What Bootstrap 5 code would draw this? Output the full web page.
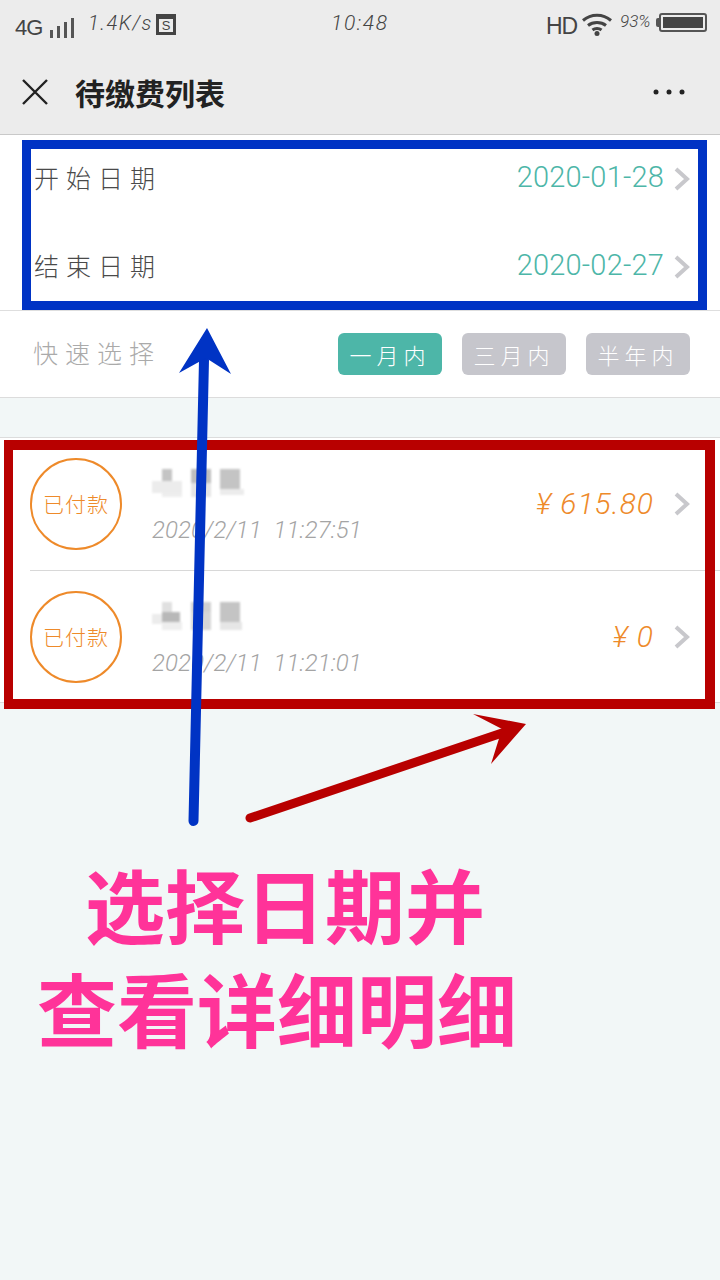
<!DOCTYPE html>
<html lang="zh">
<head>
<meta charset="utf-8">
<title>待缴费列表</title>
<link href="https://cdn.jsdelivr.net/npm/bootstrap@5.3.0/dist/css/bootstrap.min.css" rel="stylesheet">
<style>
html,body{margin:0;background:#f2f7f7}
.phone{position:relative;width:720px;height:1280px;overflow:hidden;background:#f2f7f7;font-family:"Noto Sans CJK SC",sans-serif;font-weight:300}
.latin{font-family:Roboto,"Noto Sans CJK SC",sans-serif;font-weight:300}
.statusrow{height:50px;background:#ececec;padding:0 12px 0 15px;color:#444}
.st-4g{font:400 22px/1 "Liberation Sans",sans-serif;letter-spacing:-1px;width:35px;margin-top:6px}
.st-bars{width:28px;height:20px;gap:4px;margin-top:6px}
.st-bars i{display:block;width:3px;background:#555}
.st-speed{font-size:20px;font-style:italic;margin-left:10px;width:68px;letter-spacing:1.5px;margin-top:-4px;white-space:nowrap}
.st-s{width:20px;height:21px;border:3px solid #444;border-top-width:5px;font:400 13px/1 "Liberation Sans",sans-serif;margin-top:-1px}
.st-time{font-size:21px;font-style:italic;letter-spacing:1.6px;margin-left:155px;width:215px;margin-top:-3px;white-space:nowrap}
.st-hd{font:400 23px/1 "Liberation Sans",sans-serif;letter-spacing:-1px;width:35px;margin-top:3px}
.st-pct{font-size:17px;font-style:italic;width:40px;padding-left:7px;margin-top:-6px;white-space:nowrap;flex:0 0 43px}
.st-nub{width:3px;height:9px;background:#555;margin:-6px 0 0 0;flex:0 0 3px;border-radius:2px 0 0 2px}
.st-batt{width:48px;height:19px;border:2px solid #555;border-radius:3px;padding:2px;margin-top:-6px}
.st-batt i{display:block;height:100%;background:#444}
.titlebar{height:85px;background:#ececec;border-bottom:1px solid #c9c9c9;padding:0 35px 0 22px}
.page-title{font-size:30px;line-height:1;font-weight:700;color:#222;margin:0 0 0 27px}
.panel{background:#fff}
.date-row{height:88px;padding:0 30px 0 34px}
.date-row.last{border-bottom:1px solid #dedede}
.date-label{font-size:25px;letter-spacing:7px;color:#4a4a4a;margin-top:-2px}
.date-val{font-size:29px;color:#4db6a8;margin-right:10px;letter-spacing:.2px;transform:translateY(-1px)}
.quick-row{height:87px;padding:0 30px 0 33px;border-bottom:1px solid #dcdcdc}
.quick-label{font-size:25px;letter-spacing:7px;color:#aaa;margin-top:-2px}
.range-btn{width:104px;height:42px;border:0;border-radius:6px;padding:0;font-size:22px;letter-spacing:5px;line-height:42px;color:#fff;background:#c6c6cc;font-weight:300}
.range-btn.on{background:#4db6a8}
.bill-list{margin-top:39px;background:#fff;border-top:1px solid #dcdcdc;border-bottom:1px solid #dcdcdc;padding-left:30px}
.bill{height:132px;padding-right:30px}
.bill+.bill{border-top:1px solid #d8d8d8}
.stamp{flex:0 0 92px;width:92px;height:92px;border:2px solid #ee8a2a;border-radius:50%;color:#ee8a2a;font-size:21px;letter-spacing:1px;margin-right:30px}
.bill-body{padding-top:6px}
.bill-name{display:block;width:96px;height:28px;margin-bottom:18px;filter:blur(1px)}
.bill-time{font-size:24px;line-height:30px;color:#a4a4a4;font-style:italic;letter-spacing:.1px;white-space:nowrap}
.bill-amt{font-size:30px;line-height:1;color:#ee8a2a;font-style:italic;margin-right:20px;letter-spacing:1px;white-space:nowrap}
.chev{flex:0 0 16px}
.caption{font-size:80px;line-height:104px;font-weight:700;color:#ff3399;margin-top:147px}
.cap-1{padding-left:85px}
.cap-2{padding-left:37px}
.box-blue,.box-red{position:absolute;pointer-events:none}
.box-blue{left:22px;top:140px;width:685px;height:170px;border:9px solid #0033c4}
.box-red{left:4px;top:440px;width:711px;height:269px;border:10px solid #b80000;border-left-width:9px}
.overlay{position:absolute;left:0;top:0}
</style>
</head>
<body>
<div class="phone">
  <div class="statusrow d-flex align-items-center">
    <span class="st-4g">4G</span>
    <span class="st-bars d-flex align-items-end"><i style="height:8px"></i><i style="height:12px"></i><i style="height:16px"></i><i style="height:20px"></i></span>
    <span class="st-speed latin">1.4K/s</span>
    <span class="st-s d-flex align-items-center justify-content-center">S</span>
    <span class="st-time latin">10:48</span>
    <span class="st-hd">HD</span>
    <svg width="32" height="24" viewBox="0 0 32 24" class="flex-shrink-0" style="margin-top:-2px"><path d="M2 8.5C10 1.5 22 1.500 30 8.500M7 13.500C12 9.500 20 9.500 25 13.500M11.500 18C14 16 18 16 20.500 18" fill="none" stroke="#444" stroke-width="3"/><circle cx="16" cy="21.500" r="2.500" fill="#444"/></svg>
    <span class="st-pct latin">93%</span>
    <span class="st-nub"></span>
    <span class="st-batt flex-shrink-0"><i></i></span>
  </div>

  <div class="titlebar d-flex align-items-center">
    <svg width="26" height="26" viewBox="0 0 26 26" class="flex-shrink-0"><path d="M1 1L25 25M25 1L1 25" stroke="#222" stroke-width="2.400" fill="none"/></svg>
    <h1 class="page-title flex-grow-1">待缴费列表</h1>
    <svg width="32" height="6" viewBox="0 0 32 6" class="flex-shrink-0"><circle cx="3" cy="3" r="2.500" fill="#222"/><circle cx="16" cy="3" r="2.500" fill="#222"/><circle cx="29" cy="3" r="2.500" fill="#222"/></svg>
  </div>

  <div class="panel">
    <div class="date-row d-flex align-items-center">
      <span class="date-label flex-grow-1">开始日期</span>
      <span class="date-val latin">2020-01-28</span>
      <svg class="chev" width="16" height="24" viewBox="0 0 16 24"><path d="M2 2L13 12L2 22" fill="none" stroke="#c8c8cc" stroke-width="4"/></svg>
    </div>
    <div class="date-row last d-flex align-items-center">
      <span class="date-label flex-grow-1">结束日期</span>
      <span class="date-val latin">2020-02-27</span>
      <svg class="chev" width="16" height="24" viewBox="0 0 16 24"><path d="M2 2L13 12L2 22" fill="none" stroke="#c8c8cc" stroke-width="4"/></svg>
    </div>
    <div class="quick-row d-flex align-items-center">
      <span class="quick-label flex-grow-1">快速选择</span>
      <div class="d-flex" style="gap:20px">
        <button type="button" class="btn range-btn on">一月内</button>
        <button type="button" class="btn range-btn">三月内</button>
        <button type="button" class="btn range-btn">半年内</button>
      </div>
    </div>
  </div>

  <div class="bill-list">
    <div class="bill d-flex align-items-center">
      <div class="stamp d-flex align-items-center justify-content-center">已付款</div>
      <div class="flex-grow-1 bill-body">
        <svg class="bill-name" viewBox="0 0 96 28"><g fill="#c4c4c4"><rect x="10" y="0" width="10" height="16"/><rect x="39" y="0" width="20" height="14" fill="#bdbdbd"/><rect x="68" y="0" width="20" height="20"/><rect x="0" y="12" width="30" height="12" fill="#ececec"/><rect x="39" y="14" width="20" height="14" fill="#e4e4e4"/><rect x="68" y="20" width="24" height="6" fill="#ececec"/><rect x="10" y="24" width="20" height="4" fill="#eeeeee"/></g></svg>
        <div class="bill-time latin">2020/2/11&nbsp; 11:27:51</div>
      </div>
      <div class="bill-amt latin">¥ 615.80</div>
      <svg class="chev" width="16" height="24" viewBox="0 0 16 24"><path d="M2 2L13 12L2 22" fill="none" stroke="#c8c8cc" stroke-width="4"/></svg>
    </div>
    <div class="bill d-flex align-items-center">
      <div class="stamp d-flex align-items-center justify-content-center">已付款</div>
      <div class="flex-grow-1 bill-body">
        <svg class="bill-name" viewBox="0 0 96 28"><g fill="#c4c4c4"><rect x="10" y="0" width="10" height="10" fill="#e0e0e0"/><rect x="10" y="10" width="18" height="10" fill="#b8b8b8"/><rect x="39" y="0" width="20" height="10" fill="#d0d0d0"/><rect x="39" y="10" width="20" height="18" fill="#d6d6d6"/><rect x="68" y="0" width="20" height="20"/><rect x="0" y="12" width="10" height="10" fill="#ececec"/><rect x="68" y="20" width="22" height="8" fill="#e6e6e6"/><rect x="10" y="20" width="20" height="8" fill="#eeeeee"/></g></svg>
        <div class="bill-time latin">2020/2/11&nbsp; 11:21:01</div>
      </div>
      <div class="bill-amt latin">¥ 0</div>
      <svg class="chev" width="16" height="24" viewBox="0 0 16 24"><path d="M2 2L13 12L2 22" fill="none" stroke="#c8c8cc" stroke-width="4"/></svg>
    </div>
  </div>

  <div class="caption">
    <div class="cap-1">选择日期并</div>
    <div class="cap-2">查看详细明细</div>
  </div>

  <div class="box-blue"></div>
  <div class="box-red"></div>
  <svg class="overlay" width="720" height="1280" viewBox="0 0 720 1280">
    <path d="M193.500 821L204 360" stroke="#0033c4" stroke-width="10" stroke-linecap="round" fill="none"/>
    <path d="M207 328L231 374L206 358L179 373Z" fill="#0033c4"/>
    <path d="M250 818L508 731" stroke="#b80000" stroke-width="9" stroke-linecap="round" fill="none"/>
    <path d="M526 724L473 714L502 729L491 764Z" fill="#b80000"/>
  </svg>
</div>
<script src="https://cdn.jsdelivr.net/npm/bootstrap@5.3.0/dist/js/bootstrap.bundle.min.js"></script>
</body>
</html>
